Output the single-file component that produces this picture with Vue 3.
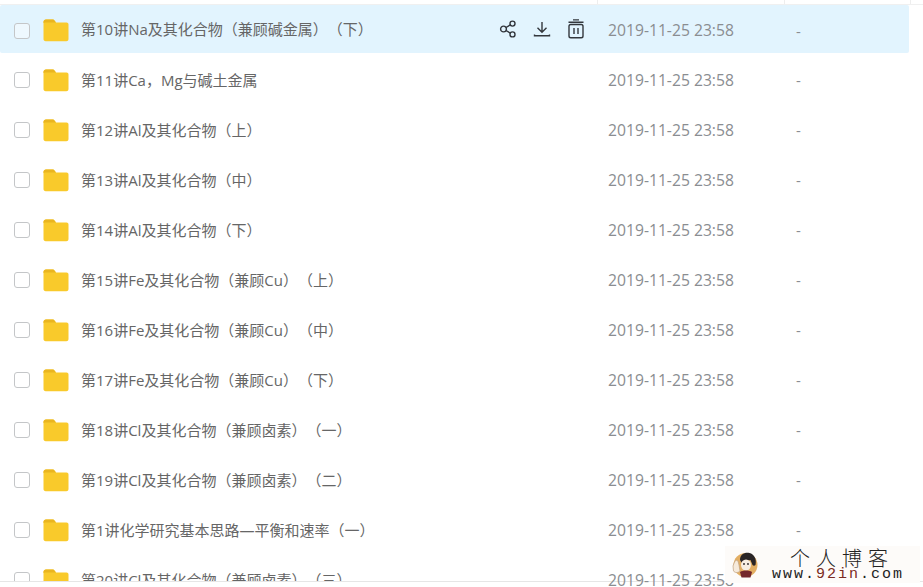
<script setup>
const names = [
  '第10讲Na及其化合物（兼顾碱金属）（下）',
  '第11讲Ca，Mg与碱土金属',
  '第12讲Al及其化合物（上）',
  '第13讲Al及其化合物（中）',
  '第14讲Al及其化合物（下）',
  '第15讲Fe及其化合物（兼顾Cu）（上）',
  '第16讲Fe及其化合物（兼顾Cu）（中）',
  '第17讲Fe及其化合物（兼顾Cu）（下）',
  '第18讲Cl及其化合物（兼顾卤素）（一）',
  '第19讲Cl及其化合物（兼顾卤素）（二）',
  '第1讲化学研究基本思路—平衡和速率（一）',
  '第20讲Cl及其化合物（兼顾卤素）（三）'
]
const rows = names.map((name, i) => ({ name, active: i === 0 }))
</script>

<template>
  <div class="page">
    <div class="head">
      <span class="tick tick-a"></span>
      <span class="tick tick-b"></span>
      <span class="tick tick-c"></span>
    </div>
    <div class="list">
      <div v-for="row in rows" :key="row.name" :class="['row', { active: row.active }]">
        <span class="check"></span>
        <svg class="folder" width="26" height="23" viewBox="0 0 26 23">
          <path d="M0.500 3C0.500 1.500 1.500 .5 3 .5h6.500c1 0 1.600.4 2.200 1.200L13 3.500h10.500C25 3.500 25.500 4.500 25.500 5.500V20c0 1.500-1 2.200-2.200 2.200H2.700C1.300 22.200 .5 21.300 .5 20z" fill="#f9ca2b" />
          <path d="M0.500 4V3C0.500 1.500 1.500 .5 3 .5h6.500c1 0 1.600.4 2.200 1.200L13 3.500H2z" fill="#eab51f" />
        </svg>
        <span class="name">{{ row.name }}</span>
        <div v-if="row.active" class="actions">
          <svg width="18" height="20" viewBox="0 0 18 20" fill="none" stroke="#33373d" stroke-width="1.400">
            <circle cx="4.500" cy="10" r="2.900" />
            <circle cx="13.500" cy="4.600" r="2.500" />
            <circle cx="13.500" cy="15.400" r="2.500" />
            <path d="M7 8.500l4.300-2.600M7 11.500l4.300 2.600" />
          </svg>
          <svg width="18" height="20" viewBox="0 0 18 20" fill="none" stroke="#33373d" stroke-width="1.400">
            <path d="M9 3v10M4.500 8.800L9 13.300l4.500-4.500M1.500 15.500v1.300h15v-1.300" />
          </svg>
          <svg width="18" height="20" viewBox="0 0 18 20" fill="none" stroke="#33373d" stroke-width="1.400">
            <path d="M6 .9h6M1.500 3.200h15" />
            <rect x="2" y="5.500" width="14" height="13.300" rx="1.800" />
            <path d="M7 9v6M11 9v6" />
          </svg>
        </div>
        <span class="date">2019-11-25 23:58</span>
        <span class="size">-</span>
      </div>
    </div>
    <div class="foot"></div>
    <div class="mark">
      <svg class="avatar" width="26" height="28" viewBox="0 0 26 28">
        <circle cx="13.500" cy="14" r="12" fill="#e3ae63" />
        <path d="M8 9c0-6 5-8 9.500-7s7.500 6 6 12c-1 1-2 1-3 0l-2-5-6 1-2 3z" fill="#2a2526" />
        <ellipse cx="14" cy="14" rx="5" ry="5.500" fill="#f8eee2" />
        <circle cx="12" cy="13" r=".9" fill="#2a2526" />
        <circle cx="16" cy="13" r=".9" fill="#2a2526" />
        <path d="M8 21c3-2 9-2 12 0l-1.500 5.500h-9z" fill="#74272c" />
        <path d="M1 15c1-3 2-5 3-6l2 1 1 4 1 6c-2 2-5 2-6.500 0z" fill="#f6eadb" stroke="#bfa080" stroke-width=".7" />
      </svg>
      <div class="mark-text">
        <div class="mark-title">个人博客</div>
        <div class="mark-url">www.<b>92in</b>.com</div>
      </div>
    </div>
  </div>
</template>

<style>
html,
body {
  margin: 0;
  background: #fff;
}
</style>

<style scoped>
.page {
  position: relative;
  width: 923px;
  height: 587px;
  overflow: hidden;
  display: flex;
  flex-direction: column;
  background: #fff;
  font-family: "Open Sans", "Noto Sans CJK SC", sans-serif;
}

.head {
  position: relative;
  flex: none;
  height: 5px;
  border-bottom: 1px solid #f0f0f0;
  box-sizing: border-box;
}

.tick {
  position: absolute;
  top: 0;
  width: 1px;
  height: 4px;
  background: #eee;
}

.tick-a {
  left: 597px;
}

.tick-b {
  left: 784px;
}

.tick-c {
  left: 910px;
}

.list {
  flex: 1;
  min-height: 0;
  overflow: hidden;
}

.row {
  width: 909px;
  height: 50px;
  display: flex;
  align-items: center;
  box-sizing: border-box;
  padding: 2px 0 0 14px;
  font-size: 15px;
  color: #666;
  text-spacing-trim: space-all;
}

.row.active {
  height: 48px;
  padding-top: 3px;
  margin-bottom: 1px;
  background: #e2f4fe;
  border-radius: 2px;
}

.check {
  flex: none;
  width: 16px;
  height: 16px;
  box-sizing: border-box;
  border: 1px solid #c4c6c8;
  border-radius: 3px;
  background: #fff;
}

.row.active .check {
  background: #eef8fe;
}

.folder {
  flex: none;
  margin-left: 13px;
}

.name {
  flex: none;
  margin: -2px 0 0 12px;
  white-space: nowrap;
}

.row.active .name {
  margin-top: -4px;
}

.actions {
  position: absolute;
  left: 499px;
  margin-top: -3px;
  display: flex;
  gap: 16px;
}

.date {
  position: absolute;
  left: 608px;
  margin-top: -1px;
  font-family: "Open Sans", sans-serif;
  font-size: 15.700px;
  color: #8a8d91;
  white-space: nowrap;
}

.size {
  position: absolute;
  left: 796px;
  color: #8a8d91;
}

.foot {
  flex: none;
  height: 6px;
  border-top: 1px solid #e6e6e6;
  box-sizing: border-box;
}

.mark {
  position: absolute;
  left: 725px;
  top: 546px;
  width: 195px;
  height: 37px;
  display: flex;
  background: #fdfbf9;
}

.avatar {
  flex: none;
  margin: 5px 0 0 7px;
}

.mark-text {
  margin-left: 14px;
  font-family: "Liberation Serif", "Noto Sans CJK SC", serif;
  color: #222;
}

.mark-title {
  margin: 1px 0 0 18px;
  font-family: "Noto Sans CJK SC", sans-serif;
  font-weight: 300;
  font-size: 20px;
  line-height: 21px;
  letter-spacing: 6px;
  white-space: nowrap;
}

.mark-url {
  font-family: "Liberation Mono", monospace;
  font-size: 15px;
  line-height: 13px;
  letter-spacing: 2px;
  white-space: nowrap;
}

.mark-url b {
  font-weight: 400;
  color: #7b2a22;
}
</style>
